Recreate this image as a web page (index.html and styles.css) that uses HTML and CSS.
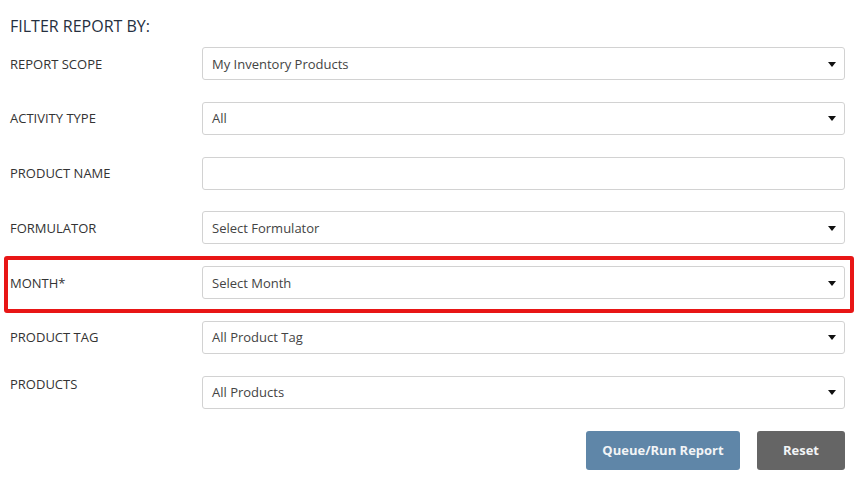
FILE: index.html
```html
<!DOCTYPE html>
<html>
<head>
<meta charset="utf-8">
<link rel="stylesheet" href="styles.css">
</head>
<body>
<div class="page">
  <h2 class="title">FILTER REPORT BY:</h2>
  <div class="form">
    <div class="row">
      <label class="label">REPORT SCOPE</label>
      <div class="select"><span>My Inventory Products</span><i class="caret"></i></div>
    </div>
    <div class="row">
      <label class="label">ACTIVITY TYPE</label>
      <div class="select"><span>All</span><i class="caret"></i></div>
    </div>
    <div class="row">
      <label class="label">PRODUCT NAME</label>
      <div class="select input"></div>
    </div>
    <div class="row">
      <label class="label">FORMULATOR</label>
      <div class="select"><span>Select Formulator</span><i class="caret"></i></div>
    </div>
    <div class="row highlight">
      <label class="label">MONTH<span class="req">*</span></label>
      <div class="select"><span>Select Month</span><i class="caret"></i></div>
    </div>
    <div class="row">
      <label class="label">PRODUCT TAG</label>
      <div class="select"><span>All Product Tag</span><i class="caret"></i></div>
    </div>
    <div class="row">
      <label class="label label-top">PRODUCTS</label>
      <div class="select"><span>All Products</span><i class="caret"></i></div>
    </div>
  </div>
  <div class="actions">
    <button class="btn btn-primary">Queue/Run Report</button>
    <button class="btn btn-reset">Reset</button>
  </div>
</div>
</body>
</html>
```
FILE: styles.css
```css
* { box-sizing: border-box; }
body {
  margin: 0;
  background: #fff;
  font-family: "Open Sans", "Liberation Sans", sans-serif;
  color: #333;
}
.page {
  padding: 16px 15px 0 10px;
  width: 860px;
}
.title {
  margin: 0;
  font-size: 16px;
  font-weight: 400;
  color: #26303f;
  line-height: 20px;
}
.form {
  margin-top: 11px;
  display: flex;
  flex-direction: column;
  gap: 21.8px;
}
.row {
  position: relative;
  display: flex;
  align-items: center;
  height: 33px;
}
.label {
  width: 192px;
  font-size: 13px;
  color: #333;
}
.label-top {
  align-self: flex-start;
  margin-top: -1px;
}
.req { color: #333; }
.select {
  flex: 1;
  height: 33px;
  border: 1px solid #d2d2d2;
  border-radius: 3px;
  display: flex;
  align-items: center;
  justify-content: space-between;
  padding: 0 8px 0 9px;
  font-size: 13px;
  color: #444;
  background: #fff;
}
.caret {
  width: 0;
  height: 0;
  border-left: 4px solid transparent;
  border-right: 4px solid transparent;
  border-top: 5px solid #111;
  margin-top: 1px;
}
.highlight::after {
  content: "";
  position: absolute;
  left: -6px;
  right: -9px;
  top: -10px;
  bottom: -14px;
  border: 4px solid #e81616;
  border-radius: 3px;
  pointer-events: none;
}
.actions {
  margin-top: 22px;
  display: flex;
  justify-content: flex-end;
  gap: 17px;
}
.btn {
  height: 39px;
  border: none;
  border-radius: 3px;
  font-family: "Open Sans", "Liberation Sans", sans-serif;
  font-weight: 700;
  font-size: 13px;
  color: #f2f4f6;
}
.btn-primary {
  width: 154px;
  background: #5f86a8;
}
.btn-reset {
  width: 88px;
  background: #656565;
}
```
